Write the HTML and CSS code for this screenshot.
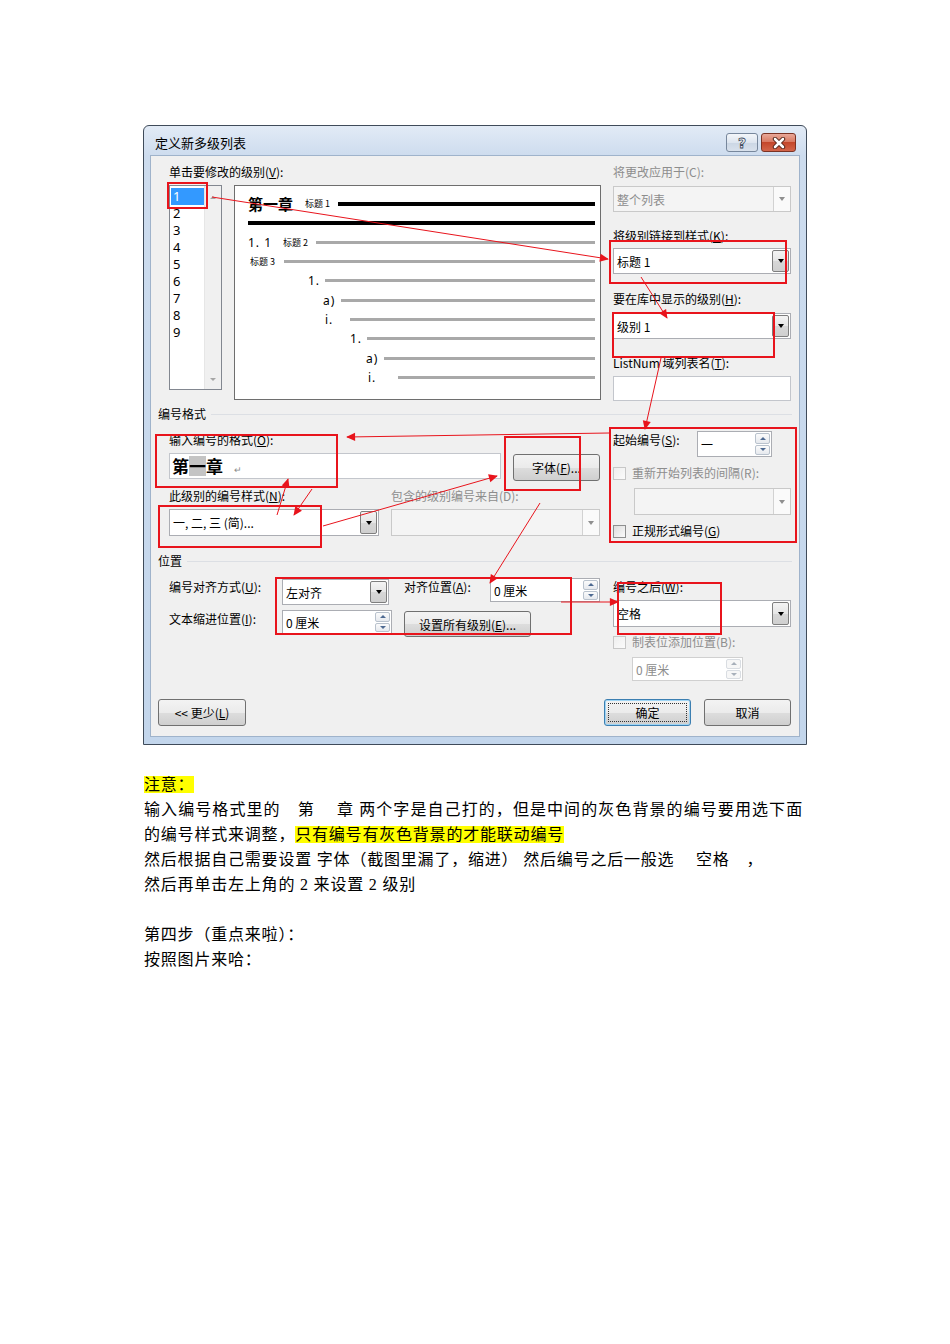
FILE: index.html
```html
<!DOCTYPE html>
<html lang="zh-CN">
<head>
<meta charset="utf-8">
<title>定义新多级列表</title>
<link rel="stylesheet" href="styles.css">
</head>
<body>
<div class="page">
  <div class="dialog">
    <div class="titlebar">
      <span class="title">定义新多级列表</span>
      <div class="tb-buttons">
        <span class="tb-btn help">?</span>
        <span class="tb-btn close">
          <svg width="14" height="12" viewBox="0 0 14 12"><path d="M3 2 L11 10 M11 2 L3 10" stroke="#4a1d12" stroke-width="4.4" stroke-linecap="round"/><path d="M3 2 L11 10 M11 2 L3 10" stroke="#fff" stroke-width="2.6" stroke-linecap="round"/></svg>
        </span>
      </div>
    </div>
    <div class="dbody">
      <div class="top">
        <div class="col-left">
          <div class="lbl">单击要修改的级别(<u>V</u>):</div>
          <div class="levels-row">
            <div class="levels">
              <div class="lv-items">
                <div class="lv sel">1</div>
                <div class="lv">2</div>
                <div class="lv">3</div>
                <div class="lv">4</div>
                <div class="lv">5</div>
                <div class="lv">6</div>
                <div class="lv">7</div>
                <div class="lv">8</div>
                <div class="lv">9</div>
              </div>
              <div class="lv-scroll"><span class="tri-up"></span><span class="tri-dn"></span></div>
            </div>
            <div class="preview">
              <div class="prow r1"><span class="p-chap">第一章</span><span class="p-style">标题 1</span><span class="bar black"></span></div>
              <div class="prow r1"><span class="bar black"></span></div>
              <div class="prow r1"><span class="p-num w35">1. 1</span><span class="p-style w33">标题 2</span><span class="bar"></span></div>
              <div class="prow r4"><span class="p-style w34">标题 3</span><span class="bar"></span></div>
              <div class="prow r5"><span class="p-num w17">1.</span><span class="bar"></span></div>
              <div class="prow r6"><span class="p-num w18">a)</span><span class="bar"></span></div>
              <div class="prow r7"><span class="p-num w25">i.</span><span class="bar"></span></div>
              <div class="prow r8"><span class="p-num w17">1.</span><span class="bar"></span></div>
              <div class="prow r9"><span class="p-num w18">a)</span><span class="bar"></span></div>
              <div class="prow r10"><span class="p-num w30">i.</span><span class="bar"></span></div>
            </div>
          </div>
        </div>
        <div class="col-right">
          <div class="lbl dis">将更改应用于(C):</div>
          <div class="combo dis h26 mt6"><span class="cv">整个列表</span><span class="arrow"></span></div>
          <div class="lbl mt16">将级别链接到样式(<u>K</u>):</div>
          <div class="combo h26 mt4"><span class="cv">标题 1</span><span class="arrow"></span></div>
          <div class="lbl mt17">要在库中显示的级别(<u>H</u>):</div>
          <div class="combo h26 mt6"><span class="cv">级别 1</span><span class="arrow"></span></div>
          <div class="lbl mt16">ListNum 域列表名(<u>T</u>):</div>
          <div class="textbox h25 mt5"></div>
        </div>
      </div>

      <div class="group-h"><span>编号格式</span></div>

      <div class="sec sec2">
        <div class="col-left pt1">
          <div class="lbl">输入编号的格式(<u>O</u>):</div>
          <div class="row mt5">
            <div class="textbox fmt"><span class="fmt-text">第<span class="shade">一</span>章</span><span class="ret">↵</span></div>
            <div class="btn font-btn">字体(<u>F</u>)...</div>
          </div>
          <div class="row mt7">
            <div class="lbl w222">此级别的编号样式(<u>N</u>):</div>
            <div class="lbl dis">包含的级别编号来自(D):</div>
          </div>
          <div class="row mt5">
            <div class="combo h27 w210"><span class="cv">一, 二, 三 (简)...</span><span class="arrow"></span></div>
            <div class="combo dis h27 w209 ml12"><span class="cv"></span><span class="arrow"></span></div>
          </div>
        </div>
        <div class="col-right">
          <div class="row">
            <div class="lbl w84 mt1">起始编号(<u>S</u>):</div>
            <div class="spin h26 w75"><span class="cv">一</span><span class="spinbtns"><span class="sb up"></span><span class="sb dn"></span></span></div>
          </div>
          <div class="check-row dis mt8"><span class="cb"></span>重新开始列表的间隔(R):</div>
          <div class="combo dis h27 w157 ml21 mt7"><span class="cv"></span><span class="arrow"></span></div>
          <div class="check-row mt8"><span class="cb"></span>正规形式编号(<u>G</u>)</div>
        </div>
      </div>

      <div class="group-h pos-h"><span>位置</span></div>

      <div class="sec sec3">
        <div class="col-left pos-grid">
          <div class="lbl mt1">编号对齐方式(<u>U</u>):</div>
          <div class="combo h26 w107 mt1"><span class="cv">左对齐</span><span class="arrow"></span></div>
          <div class="lbl mt1">对齐位置(<u>A</u>):</div>
          <div class="spin h24 w110"><span class="cv">0 厘米</span><span class="spinbtns"><span class="sb up"></span><span class="sb dn"></span></span></div>
          <div class="lbl mt1">文本缩进位置(<u>I</u>):</div>
          <div class="spin h24 w110"><span class="cv">0 厘米</span><span class="spinbtns"><span class="sb up"></span><span class="sb dn"></span></span></div>
          <div class="btn all-btn mt1">设置所有级别(<u>E</u>)...</div>
        </div>
        <div class="col-right pt1">
          <div class="lbl">编号之后(<u>W</u>):</div>
          <div class="combo h27 mt5"><span class="cv">空格</span><span class="arrow"></span></div>
          <div class="check-row dis mt7"><span class="cb"></span>制表位添加位置(B):</div>
          <div class="spin dis h24 w111 ml19 mt7"><span class="cv">0 厘米</span><span class="spinbtns"><span class="sb up"></span><span class="sb dn"></span></span></div>
        </div>
      </div>

      <div class="bottom">
        <div class="btn more-btn">&lt;&lt; 更少(<u>L</u>)</div>
        <div class="spacer"></div>
        <div class="btn ok-btn">确定</div>
        <div class="btn cancel-btn">取消</div>
      </div>
    </div>
  </div>

  <div class="notes">
    <div class="ln"><mark>注意：</mark></div>
    <div class="ln just">输入编号格式里的　第　 章 两个字是自己打的，但是中间的灰色背景的编号要用选下面</div>
    <div class="ln">的编号样式来调整，<mark>只有编号有灰色背景的才能联动编号</mark></div>
    <div class="ln">然后根据自己需要设置 字体（截图里漏了，缩进） 然后编号之后一般选　 空格　，</div>
    <div class="ln">然后再单击左上角的 2 来设置 2 级别</div>
    <div class="ln blank"></div>
    <div class="ln">第四步（重点来啦）：</div>
    <div class="ln">按照图片来哈：</div>
  </div>

  <svg class="annot" width="950" height="1344" viewBox="0 0 950 1344">
    <defs>
      <marker id="ah" viewBox="0 0 10 10" refX="9" refY="5" markerWidth="10" markerHeight="9" markerUnits="userSpaceOnUse" orient="auto">
        <path d="M0,0.5 L10,5 L0,9.5 z" fill="#e8141c"/>
      </marker>
    </defs>
    <g fill="none" stroke="#e8141c" stroke-width="2">
      <rect x="168" y="183" width="39" height="25"/>
      <rect x="610" y="241" width="176" height="42"/>
      <rect x="613" y="313" width="161" height="44"/>
      <rect x="156" y="435" width="181" height="52"/>
      <rect x="505" y="437" width="75" height="53"/>
      <rect x="159" y="506" width="162" height="41"/>
      <rect x="610" y="428" width="186" height="114"/>
      <rect x="276" y="578" width="295" height="56"/>
      <rect x="618" y="583" width="103" height="51"/>
    </g>
    <g stroke="#e8141c" stroke-width="1" fill="none">
      <line x1="212" y1="197" x2="608" y2="259" marker-end="url(#ah)"/>
      <line x1="641" y1="277" x2="667" y2="318" marker-end="url(#ah)"/>
      <line x1="661" y1="358" x2="645" y2="429" marker-end="url(#ah)"/>
      <line x1="609" y1="433" x2="347" y2="437" marker-end="url(#ah)"/>
      <line x1="323" y1="526" x2="497" y2="476" marker-end="url(#ah)"/>
      <line x1="277" y1="515" x2="288" y2="479" marker-end="url(#ah)"/>
      <line x1="312" y1="489" x2="294" y2="515" marker-end="url(#ah)"/>
      <line x1="540" y1="503" x2="490" y2="583" marker-end="url(#ah)"/>
      <line x1="561" y1="602" x2="618" y2="602" marker-end="url(#ah)"/>
    </g>
  </svg>
</div>
</body>
</html>
```
FILE: styles.css
```css
* { box-sizing: border-box; }

body {
  margin: 0;
  background: #fff;
}

.page {
  position: relative;
  width: 950px;
  height: 1344px;
  padding: 125px 0 0 143px;
  overflow: hidden;
}

/* ---------- dialog frame ---------- */
.dialog {
  width: 664px;
  height: 620px;
  border: 1px solid #3f4b5a;
  border-radius: 6px 6px 0 0;
  background: linear-gradient(#e2ebf6, #cddcee 30px, #c3d6ec 100%);
  padding: 0 6px 7px 6px;
  display: flex;
  flex-direction: column;
  font-family: "Noto Sans CJK SC", "Microsoft YaHei", sans-serif;
  font-size: 12px;
  color: #000;
}

.titlebar {
  height: 29px;
  display: flex;
  justify-content: space-between;
  align-items: flex-start;
}

.title {
  padding: 7px 0 0 5px;
  line-height: 20px;
  font-size: 13px;
}

.tb-buttons {
  display: flex;
  gap: 3px;
  margin: 7px 4px 0 0;
}

.tb-btn {
  height: 19px;
  border-radius: 3px;
  display: flex;
  align-items: center;
  justify-content: center;
}

.help {
  width: 32px;
  border: 1px solid #77879c;
  background: linear-gradient(#f3f6fa, #dde5ef 50%, #cbd6e4 51%, #d8e1ec);
  font-family: "DejaVu Sans", sans-serif;
  font-size: 14px;
  font-weight: bold;
  color: #f4f6f9;
  -webkit-text-stroke: 0.8px #3d4a5c;
}

.close {
  width: 35px;
  border: 1px solid #7b3324;
  background: linear-gradient(#e9a899, #d97b64 45%, #c4472b 50%, #d3654a);
}

.dbody {
  flex: 1;
  background: #f0f0f0;
  border: 1px solid #9fb3cb;
  padding: 8px 7px 0 7px;
}

/* ---------- common controls ---------- */
.lbl {
  height: 16px;
  line-height: 16px;
  white-space: nowrap;
}

.dis { color: #8d8d8d; }

.row { display: flex; align-items: flex-start; }

.col-left { width: 432px; }
.col-right { width: 178px; }

.top, .sec {
  display: flex;
  gap: 12px;
  margin-left: 11px;
}

.combo, .spin, .textbox {
  display: flex;
  align-items: stretch;
  background: #fff;
  border: 1px solid #abadb3;
}

.cv {
  flex: 1;
  display: flex;
  align-items: center;
  padding-left: 3px;
  white-space: nowrap;
  overflow: hidden;
}

.combo .arrow {
  width: 17px;
  margin: 1px;
  border: 1px solid #7e7e7e;
  border-radius: 2px;
  background: linear-gradient(#f4f4f4, #e6e6e6 50%, #d7d7d7 51%, #cfcfcf);
  display: flex;
  align-items: center;
  justify-content: center;
}

.combo .arrow::after {
  content: "";
  border-left: 3.5px solid transparent;
  border-right: 3.5px solid transparent;
  border-top: 4px solid #000;
}

.combo.dis {
  background: #f4f4f4;
  border-color: #c9c9c9;
}

.combo.dis .arrow {
  margin: 0;
  border: none;
  border-left: 1px solid #d2d2d2;
  border-radius: 0;
  background: #fafafa;
}

.combo.dis .arrow::after { border-top-color: #8f8f8f; }

.spinbtns {
  width: 17px;
  display: flex;
  flex-direction: column;
  padding: 1px;
  gap: 1px;
}

.sb {
  flex: 1;
  border: 1px solid #b9c2cd;
  border-radius: 2px;
  background: linear-gradient(#fbfbfb, #e6e9ee);
  display: flex;
  align-items: center;
  justify-content: center;
}

.sb.up::after {
  content: "";
  border-left: 3px solid transparent;
  border-right: 3px solid transparent;
  border-bottom: 3px solid #4e6a92;
}

.sb.dn::after {
  content: "";
  border-left: 3px solid transparent;
  border-right: 3px solid transparent;
  border-top: 3px solid #4e6a92;
}

.spin.dis { border-color: #d0d0d0; }
.spin.dis .cv { color: #8d8d8d; }
.spin.dis .sb { border-color: #d9dde2; background: #f7f7f7; }
.spin.dis .sb.up::after { border-bottom-color: #a8b0ba; }
.spin.dis .sb.dn::after { border-top-color: #a8b0ba; }

.textbox { border-color: #c3c6cc; }

.btn {
  display: flex;
  align-items: center;
  justify-content: center;
  height: 27px;
  border: 1px solid #707070;
  border-radius: 3px;
  background: linear-gradient(#f3f3f3, #ebebeb 50%, #dddddd 51%, #cfcfcf);
  white-space: nowrap;
}

.check-row {
  display: flex;
  align-items: center;
  height: 16px;
  line-height: 16px;
  white-space: nowrap;
}

.cb {
  width: 13px;
  height: 13px;
  margin-right: 6px;
  border: 1px solid #8e8f8f;
  background: linear-gradient(135deg, #dcdcdc, #fbfbfb);
}

.check-row.dis .cb {
  border-color: #c7c7c7;
  background: linear-gradient(135deg, #eeeeee, #fbfbfb);
}

/* sizes & spacing */
.h24 { height: 24px; }
.h25 { height: 25px; }
.h26 { height: 26px; }
.h27 { height: 27px; }
.w75 { width: 75px; }
.w84 { width: 84px; }
.w107 { width: 107px; }
.w110 { width: 110px; }
.w111 { width: 111px; }
.w157 { width: 157px; }
.w209 { width: 209px; }
.w210 { width: 210px; }
.w222 { width: 222px; }
.mt1 { margin-top: 1px; }
.mt4 { margin-top: 4px; }
.mt5 { margin-top: 5px; }
.mt6 { margin-top: 6px; }
.mt7 { margin-top: 7px; }
.mt8 { margin-top: 8px; }
.mt16 { margin-top: 16px; }
.mt17 { margin-top: 17px; }
.ml12 { margin-left: 12px; }
.ml19 { margin-left: 19px; }
.ml21 { margin-left: 21px; }
.pt1 { padding-top: 1px; }

/* ---------- level list & preview ---------- */
.levels-row {
  display: flex;
  align-items: flex-start;
  margin-top: 5px;
}

.levels {
  width: 53px;
  height: 205px;
  border: 1px solid #828790;
  background: #fff;
  display: flex;
}

.lv-items {
  flex: 1;
  padding: 2px 0 0 1px;
}

.lv {
  width: 33px;
  height: 17px;
  line-height: 17px;
  padding-left: 2px;
  font-family: "Noto Sans", "Open Sans", sans-serif;
  font-size: 13px;
}

.lv.sel {
  background: #3399ff;
  color: #fff;
}

.lv-scroll {
  width: 17px;
  background: #f0f0f0;
  border-left: 1px solid #e6e6e6;
  display: flex;
  flex-direction: column;
  align-items: center;
  justify-content: space-between;
  padding: 10px 0 8px;
}

.tri-up {
  border-left: 3px solid transparent;
  border-right: 3px solid transparent;
  border-bottom: 3px solid #a6a6a6;
}

.tri-dn {
  border-left: 3px solid transparent;
  border-right: 3px solid transparent;
  border-top: 3px solid #a6a6a6;
}

.preview {
  width: 367px;
  height: 215px;
  margin-left: 12px;
  border: 1px solid #6e6e6e;
  background: #fff;
  padding: 8px 5px 0 0;
}

.prow {
  height: 19.3px;
  display: flex;
  align-items: center;
  white-space: nowrap;
}

.r1 { padding-left: 13px; }
.r4 { padding-left: 15px; }
.r5 { padding-left: 73px; }
.r6 { padding-left: 88px; }
.r7 { padding-left: 90px; }
.r8 { padding-left: 115px; }
.r9 { padding-left: 131px; }
.r10 { padding-left: 133px; }

.p-chap {
  font-size: 15px;
  font-weight: bold;
  width: 57px;
}

.p-style {
  font-size: 9px;
  width: 33px;
}

.p-num {
  font-family: "Noto Sans", sans-serif;
  font-size: 12px;
  letter-spacing: 1px;
}

.w17 { width: 17px; }
.w18 { width: 18px; }
.w25 { width: 25px; }
.w30 { width: 30px; }
.w33 { width: 33px; }
.w34 { width: 34px; }
.w35 { width: 35px; }

.bar {
  flex: 1;
  height: 3px;
  background: #a9a9a9;
}

.bar.black {
  height: 4px;
  background: #000;
}

/* ---------- group headings ---------- */
.group-h {
  display: flex;
  align-items: center;
  height: 16px;
  line-height: 16px;
  margin-top: 5px;
}

.group-h::after {
  content: "";
  flex: 1;
  margin: 1px 0 0 5px;
  border-top: 1px solid #dcdfe4;
}

.pos-h { margin-top: 14px; }

/* ---------- number format section ---------- */
.sec2 { margin-top: 9px; }

.fmt {
  width: 332px;
  height: 26px;
  align-items: center;
  padding-left: 2px;
}

.fmt-text {
  font-size: 17px;
  font-weight: bold;
  line-height: 20px;
}

.shade {
  display: inline-block;
  background: #c4c4c4;
}

.ret {
  font-size: 9px;
  color: #8a8a8a;
  margin: 6px 0 0 11px;
}

.font-btn {
  width: 87px;
  margin: 1px 0 0 12px;
}

/* ---------- position section ---------- */
.sec3 { margin-top: 9px; }

.pos-grid {
  display: grid;
  grid-template-columns: 113px 122px 86px 111px;
  grid-template-rows: 27px 27px;
  row-gap: 5px;
  align-items: start;
}

.all-btn {
  grid-column: 3 / span 2;
  width: 127px;
  height: 26px;
}

/* ---------- bottom buttons ---------- */
.bottom {
  display: flex;
  margin-top: 18px;
}

.spacer { flex: 1; }

.more-btn { width: 88px; }

.ok-btn {
  width: 87px;
  position: relative;
  border-color: #3c7fb1;
  box-shadow: inset 0 0 0 1px #9fd5f5;
}

.ok-btn::after {
  content: "";
  position: absolute;
  inset: 3px;
  border: 1px dotted #333;
}

.cancel-btn {
  width: 87px;
  margin: 0 1px 0 13px;
}

/* ---------- notes text ---------- */
.notes {
  width: 659px;
  margin: 27px 0 0 1px;
  font-family: "Liberation Serif", "Noto Sans CJK SC", serif;
  font-size: 16px;
  letter-spacing: 0.8px;
  line-height: 25px;
  color: #000;
}

.ln {
  height: 25px;
  white-space: pre;
}

.ln.just {
  white-space: normal;
  text-align: justify;
  text-align-last: justify;
}

mark {
  background: #ffff00;
  color: inherit;
}

/* ---------- annotations ---------- */
.annot {
  position: absolute;
  left: 0;
  top: 0;
  pointer-events: none;
}
```
